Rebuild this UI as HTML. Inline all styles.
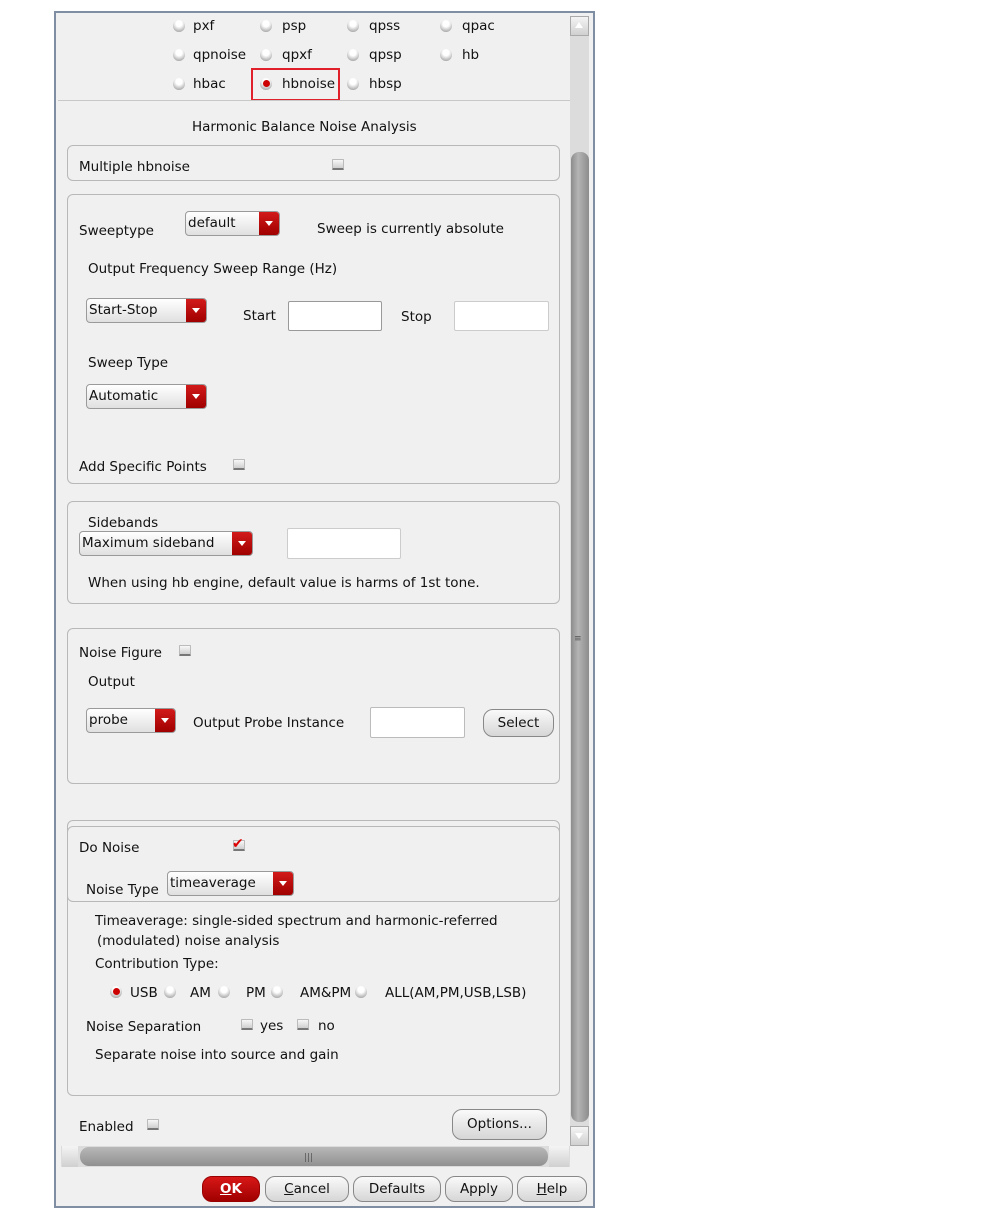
<!DOCTYPE html>
<html><head><meta charset="utf-8"><style>
*{margin:0;padding:0;box-sizing:border-box}
body{width:999px;height:1213px;background:#fff;position:relative;overflow:hidden;font-family:"DejaVu Sans","Liberation Sans",sans-serif;font-size:13.5px;color:#111}
.a{position:absolute;white-space:nowrap;line-height:18px;margin-top:1px}
#win{position:absolute;left:54px;top:11px;width:541px;height:1197px;border:2px solid #7f8ea3;background:#f0f0f0}
.box{position:absolute;border:1px solid #b8b8b8;border-radius:6px}
.rad{position:absolute;width:12px;height:12px;border-radius:50%;background:radial-gradient(circle at 50% 30%,#fff 30%,#c4c4c4 65%,#8a8a8a 100%)}
.rad.on::after{content:"";position:absolute;left:3px;top:2px;width:7px;height:7px;border-radius:50%;background:#c00}
.chk{position:absolute;width:12px;height:11px;background:linear-gradient(#f8f8f8,#cfcfcf);border:1px solid #bbb;border-bottom:2px solid #777;border-radius:1px}
.dd{position:absolute;height:25px;border:1px solid #9a9a9a;border-radius:4px;background:linear-gradient(#fff,#e0e0e0);padding-left:2px;line-height:22px;overflow:hidden}
.dd::after{content:"";position:absolute;right:0;top:0;width:20px;height:100%;background:linear-gradient(#d21a1a,#a00000)}
.dd i{position:absolute;right:6px;top:9px;width:0;height:0;border-left:4px solid transparent;border-right:4px solid transparent;border-top:5px solid #fff;z-index:2}
.inp{position:absolute;background:#fff;border:1px solid #999;border-radius:2px}
.btn{position:absolute;height:28px;border:1px solid #888;border-radius:10px;background:linear-gradient(#fafafa,#d6d6d6);text-align:center;line-height:26px}
</style></head><body>
<div id="win"></div>
<div style="position:absolute;left:570px;top:16px;width:19px;height:1130px;background:#dcdcdc"></div>
<div style="position:absolute;left:570px;top:16px;width:19px;height:20px;background:linear-gradient(#f4f4f4,#d0d0d0);border:1px solid #aaa"></div>
<div style="position:absolute;left:575px;top:22px;border-left:4px solid transparent;border-right:4px solid transparent;border-bottom:6px solid #fff"></div>
<div style="position:absolute;left:571px;top:152px;width:18px;height:970px;background:linear-gradient(90deg,#8c8c8c,#b4b4b4 40%,#8c8c8c);border-radius:8px"></div>
<div class="a" style="left:574px;top:629px;font-size:9px;color:#555">≡</div>
<div style="position:absolute;left:570px;top:1126px;width:19px;height:20px;background:linear-gradient(#f4f4f4,#d0d0d0);border:1px solid #aaa"></div>
<div style="position:absolute;left:575px;top:1133px;border-left:4px solid transparent;border-right:4px solid transparent;border-top:6px solid #fff"></div>
<div style="position:absolute;left:61px;top:1146px;width:509px;height:21px;background:#dcdcdc"></div>
<div style="position:absolute;left:80px;top:1147px;width:468px;height:19px;background:linear-gradient(#b8b8b8,#909090);border-radius:9px"></div>
<div class="a" style="left:304px;top:1148px;font-size:9px;color:#555">|||</div>
<div style="position:absolute;left:549px;top:1146px;width:20px;height:21px;background:linear-gradient(#f4f4f4,#d0d0d0)"></div>
<div style="position:absolute;left:62px;top:1146px;width:16px;height:21px;background:linear-gradient(#f4f4f4,#d0d0d0)"></div>
<div class="rad" style="left:173px;top:20px"></div><div class="a" style="left:193px;top:16px">pxf</div>
<div class="rad" style="left:260px;top:20px"></div><div class="a" style="left:282px;top:16px">psp</div>
<div class="rad" style="left:347px;top:20px"></div><div class="a" style="left:369px;top:16px">qpss</div>
<div class="rad" style="left:440px;top:20px"></div><div class="a" style="left:462px;top:16px">qpac</div>
<div class="rad" style="left:173px;top:49px"></div><div class="a" style="left:193px;top:45px">qpnoise</div>
<div class="rad" style="left:260px;top:49px"></div><div class="a" style="left:282px;top:45px">qpxf</div>
<div class="rad" style="left:347px;top:49px"></div><div class="a" style="left:369px;top:45px">qpsp</div>
<div class="rad" style="left:440px;top:49px"></div><div class="a" style="left:462px;top:45px">hb</div>
<div class="rad" style="left:173px;top:78px"></div><div class="a" style="left:193px;top:74px">hbac</div>
<div class="rad on" style="left:260px;top:78px"></div><div class="a" style="left:282px;top:74px">hbnoise</div>
<div class="rad" style="left:347px;top:78px"></div><div class="a" style="left:369px;top:74px">hbsp</div>
<div style="position:absolute;left:251px;top:68px;width:89px;height:33px;border:2px solid #e0202a"></div>
<div style="position:absolute;left:58px;top:100px;width:512px;height:1px;background:#c8c8c8"></div>
<div class="a" style="left:192px;top:117px">Harmonic Balance Noise Analysis</div>
<div class="box" style="left:67px;top:145px;width:493px;height:36px"></div>
<div class="a" style="left:79px;top:157px">Multiple hbnoise</div>
<div class="chk" style="left:332px;top:159px"></div>
<div class="box" style="left:67px;top:194px;width:493px;height:290px"></div>
<div class="a" style="left:79px;top:221px">Sweeptype</div>
<div class="dd" style="left:185px;top:211px;width:95px">default<i></i></div>
<div class="a" style="left:317px;top:219px">Sweep is currently absolute</div>
<div class="a" style="left:88px;top:259px">Output Frequency Sweep Range (Hz)</div>
<div class="dd" style="left:86px;top:298px;width:121px">Start-Stop<i></i></div>
<div class="a" style="left:243px;top:306px">Start</div>
<div class="inp" style="left:288px;top:301px;width:94px;height:30px"></div>
<div class="a" style="left:401px;top:307px">Stop</div>
<div class="inp" style="left:454px;top:301px;width:95px;height:30px;border-color:#ccc"></div>
<div class="a" style="left:88px;top:353px">Sweep Type</div>
<div class="dd" style="left:86px;top:384px;width:121px">Automatic<i></i></div>
<div class="a" style="left:79px;top:457px">Add Specific Points</div>
<div class="chk" style="left:233px;top:459px"></div>
<div class="box" style="left:67px;top:501px;width:493px;height:103px"></div>
<div class="a" style="left:88px;top:513px">Sidebands</div>
<div class="dd" style="left:79px;top:531px;width:174px">Maximum sideband<i></i></div>
<div class="inp" style="left:287px;top:528px;width:114px;height:31px;border-color:#ccc"></div>
<div class="a" style="left:88px;top:573px">When using hb engine, default value is harms of 1st tone.</div>
<div class="box" style="left:67px;top:628px;width:493px;height:156px"></div>
<div class="a" style="left:79px;top:643px">Noise Figure</div>
<div class="chk" style="left:179px;top:645px"></div>
<div class="a" style="left:88px;top:672px">Output</div>
<div class="dd" style="left:86px;top:708px;width:90px">probe<i></i></div>
<div class="a" style="left:193px;top:713px">Output Probe Instance</div>
<div class="inp" style="left:370px;top:707px;width:95px;height:31px;border-color:#bbb"></div>
<div class="btn" style="left:483px;top:709px;width:71px">Select</div>
<div class="box" style="left:67px;top:820px;width:493px;height:276px"></div>
<div class="box" style="left:67px;top:826px;width:493px;height:76px"></div>
<div class="a" style="left:79px;top:838px">Do Noise</div>
<div class="chk" style="left:233px;top:840px"></div>
<div class="a" style="left:232px;top:834px;color:#d00;font-size:14px;font-weight:bold">✔</div>
<div class="a" style="left:86px;top:880px">Noise Type</div>
<div class="dd" style="left:167px;top:871px;width:127px">timeaverage<i></i></div>
<div class="a" style="left:95px;top:911px">Timeaverage: single-sided spectrum and harmonic-referred</div>
<div class="a" style="left:97px;top:931px">(modulated) noise analysis</div>
<div class="a" style="left:95px;top:954px">Contribution Type:</div>
<div class="rad on" style="left:110px;top:986px"></div><div class="a" style="left:130px;top:983px">USB</div>
<div class="rad" style="left:164px;top:986px"></div><div class="a" style="left:190px;top:983px">AM</div>
<div class="rad" style="left:218px;top:986px"></div><div class="a" style="left:246px;top:983px">PM</div>
<div class="rad" style="left:271px;top:986px"></div><div class="a" style="left:300px;top:983px">AM&amp;PM</div>
<div class="rad" style="left:355px;top:986px"></div><div class="a" style="left:385px;top:983px">ALL(AM,PM,USB,LSB)</div>
<div class="a" style="left:86px;top:1017px">Noise Separation</div>
<div class="chk" style="left:241px;top:1019px"></div><div class="a" style="left:260px;top:1016px">yes</div>
<div class="chk" style="left:297px;top:1019px"></div><div class="a" style="left:318px;top:1016px">no</div>
<div class="a" style="left:95px;top:1045px">Separate noise into source and gain</div>
<div class="a" style="left:79px;top:1117px">Enabled</div>
<div class="chk" style="left:147px;top:1119px"></div>
<div class="btn" style="left:452px;top:1109px;width:95px;height:31px;line-height:29px">Options...</div>
<div class="btn" style="left:202px;top:1176px;width:58px;height:26px;line-height:24px;background:linear-gradient(#d81818,#a00000);border-color:#900;color:#fff;font-weight:bold"><u>O</u>K</div>
<div class="btn" style="left:265px;top:1176px;width:84px;height:26px;line-height:24px"><u>C</u>ancel</div>
<div class="btn" style="left:353px;top:1176px;width:88px;height:26px;line-height:24px">Defaults</div>
<div class="btn" style="left:445px;top:1176px;width:68px;height:26px;line-height:24px">Apply</div>
<div class="btn" style="left:517px;top:1176px;width:70px;height:26px;line-height:24px"><u>H</u>elp</div>
</body></html>
